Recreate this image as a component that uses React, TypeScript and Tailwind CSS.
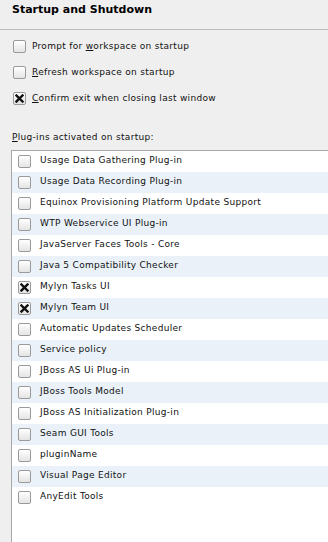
const options = [
  { pre: "Prompt for ", u: "w", post: "orkspace on startup", checked: false },
  { pre: "", u: "R", post: "efresh workspace on startup", checked: false },
  { pre: "", u: "C", post: "onfirm exit when closing last window", checked: true },
];

const plugins = [
  { name: "Usage Data Gathering Plug-in", checked: false },
  { name: "Usage Data Recording Plug-in", checked: false },
  { name: "Equinox Provisioning Platform Update Support", checked: false },
  { name: "WTP Webservice UI Plug-in", checked: false },
  { name: "JavaServer Faces Tools - Core", checked: false },
  { name: "Java 5 Compatibility Checker", checked: false },
  { name: "Mylyn Tasks UI", checked: true },
  { name: "Mylyn Team UI", checked: true },
  { name: "Automatic Updates Scheduler", checked: false },
  { name: "Service policy", checked: false },
  { name: "JBoss AS Ui Plug-in", checked: false },
  { name: "JBoss Tools Model", checked: false },
  { name: "JBoss AS Initialization Plug-in", checked: false },
  { name: "Seam GUI Tools", checked: false },
  { name: "pluginName", checked: false },
  { name: "Visual Page Editor", checked: false },
  { name: "AnyEdit Tools", checked: false },
];

function Box({ checked }: { checked: boolean }) {
  return (
    <span className="flex h-[13px] w-[13px] shrink-0 items-center justify-center rounded-[2px] border border-[#9a9a9a] bg-gradient-to-b from-white to-[#e4e4e4]">
      {checked ? (
        <svg width="9" height="9" viewBox="0 0 9 9">
          <path d="M1.5 1.5 L7.5 7.5 M7.5 1.5 L1.5 7.5" stroke="#111" strokeWidth="2.4" strokeLinecap="square" />
        </svg>
      ) : null}
    </span>
  );
}

export default function App() {
  return (
    <div className="h-[542px] w-[328px] overflow-hidden bg-[#efefef] font-['DejaVu_Sans',sans-serif] text-[9px] text-[#111]">
      <div className="h-[30px] border-b border-[#bdbdbd] pl-[12px] pt-[2px] text-[11px] font-bold leading-[16px] text-black">
        Startup and Shutdown
      </div>

      <div className="flex flex-col gap-[13px] pl-[13px] pt-[10px]">
        {options.map((o) => (
          <div key={o.post} className="flex h-[13px] items-center gap-[6px]">
            <Box checked={o.checked} />
            <span className="whitespace-nowrap tracking-[0.3px]">
              {o.pre}
              <span className="underline">{o.u}</span>
              {o.post}
            </span>
          </div>
        ))}
      </div>

      <div className="mt-[26px] pl-[12px] tracking-[0.3px]">
        <span className="underline">P</span>lug-ins activated on startup:
      </div>

      <div className="ml-[11px] mt-[5px] h-[400px] border-l border-t border-[#a8a8a8] bg-white">
        {plugins.map((p, i) => (
          <div
            key={p.name}
            className={`flex h-[21px] items-center gap-[9px] pl-[6px] ${i % 2 === 1 ? "bg-[#eaf1f9]" : "bg-white"}`}
          >
            <Box checked={p.checked} />
            <span className="whitespace-nowrap tracking-[0.3px]">{p.name}</span>
          </div>
        ))}
      </div>
    </div>
  );
}
